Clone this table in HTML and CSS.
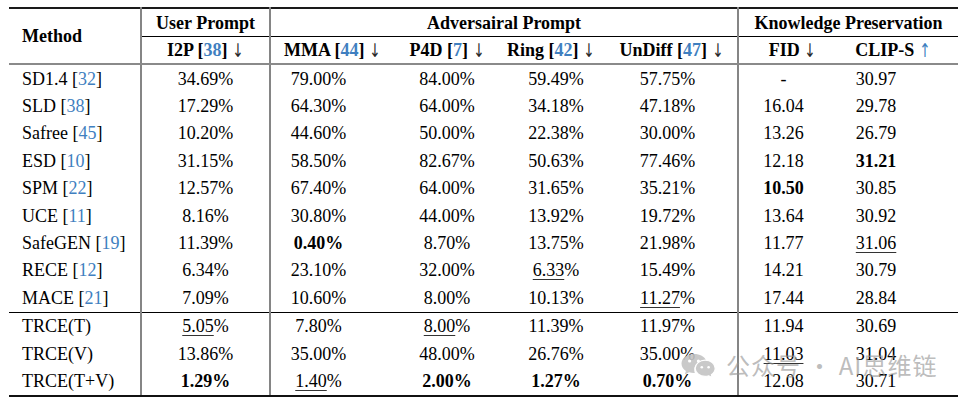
FILE: index.html
```html
<!DOCTYPE html>
<html lang="en">
<head>
<meta charset="utf-8">
<title>Results table</title>
<link rel="stylesheet" href="styles.css">
</head>
<body>
<div class="page">
  <table class="results">
    <colgroup>
      <col class="c-method"><col class="c-user"><col class="c-mma"><col class="c-p4d"><col class="c-ring"><col class="c-undiff"><col class="c-fid"><col class="c-clip">
    </colgroup>
    <thead>
      <tr class="h1">
        <th rowspan="2" class="method-h vsep">Method</th>
        <th class="vsep grp">User Prompt</th>
        <th colspan="4" class="vsep grp">Adversairal Prompt</th>
        <th colspan="2" class="grp">Knowledge Preservation</th>
      </tr>
      <tr class="h2">
        <th class="vsep">I2P [<span class="cite">38</span>] <span class="arr">↓</span></th>
        <th class="h-mma">MMA [<span class="cite">44</span>] <span class="arr">↓</span></th>
        <th>P4D [<span class="cite">7</span>] <span class="arr">↓</span></th>
        <th class="h-ring">Ring [<span class="cite">42</span>] <span class="arr">↓</span></th>
        <th class="vsep h-undiff">UnDiff [<span class="cite">47</span>] <span class="arr">↓</span></th>
        <th class="h-fid">FID <span class="arr">↓</span></th>
        <th class="h-clip">CLIP-S <span class="arr up">↑</span></th>
      </tr>
    </thead>
    <tbody>
      <tr><td class="m vsep">SD1.4 [<span class="cite">32</span>]</td><td class="vsep">34.69%</td><td class="mma">79.00%</td><td>84.00%</td><td>59.49%</td><td class="vsep und">57.75%</td><td>-</td><td class="clip">30.97</td></tr>
      <tr><td class="m vsep">SLD [<span class="cite">38</span>]</td><td class="vsep">17.29%</td><td class="mma">64.30%</td><td>64.00%</td><td>34.18%</td><td class="vsep und">47.18%</td><td>16.04</td><td class="clip">29.78</td></tr>
      <tr><td class="m vsep">Safree [<span class="cite">45</span>]</td><td class="vsep">10.20%</td><td class="mma">44.60%</td><td>50.00%</td><td>22.38%</td><td class="vsep und">30.00%</td><td>13.26</td><td class="clip">26.79</td></tr>
      <tr><td class="m vsep">ESD [<span class="cite">10</span>]</td><td class="vsep">31.15%</td><td class="mma">58.50%</td><td>82.67%</td><td>50.63%</td><td class="vsep und">77.46%</td><td>12.18</td><td class="clip"><b>31.21</b></td></tr>
      <tr><td class="m vsep">SPM [<span class="cite">22</span>]</td><td class="vsep">12.57%</td><td class="mma">67.40%</td><td>64.00%</td><td>31.65%</td><td class="vsep und">35.21%</td><td><b>10.50</b></td><td class="clip">30.85</td></tr>
      <tr><td class="m vsep">UCE [<span class="cite">11</span>]</td><td class="vsep">8.16%</td><td class="mma">30.80%</td><td>44.00%</td><td>13.92%</td><td class="vsep und">19.72%</td><td>13.64</td><td class="clip">30.92</td></tr>
      <tr><td class="m vsep">SafeGEN [<span class="cite">19</span>]</td><td class="vsep">11.39%</td><td class="mma"><b>0.40%</b></td><td>8.70%</td><td>13.75%</td><td class="vsep und">21.98%</td><td>11.77</td><td class="clip"><u>31.06</u></td></tr>
      <tr><td class="m vsep">RECE [<span class="cite">12</span>]</td><td class="vsep">6.34%</td><td class="mma">23.10%</td><td>32.00%</td><td><u>6.33</u>%</td><td class="vsep und">15.49%</td><td>14.21</td><td class="clip">30.79</td></tr>
      <tr class="mid"><td class="m vsep">MACE [<span class="cite">21</span>]</td><td class="vsep">7.09%</td><td class="mma">10.60%</td><td>8.00%</td><td>10.13%</td><td class="vsep und"><u>11.27</u>%</td><td>17.44</td><td class="clip">28.84</td></tr>
      <tr><td class="m vsep">TRCE(T)</td><td class="vsep"><u>5.05</u>%</td><td class="mma">7.80%</td><td><u>8.00</u>%</td><td>11.39%</td><td class="vsep und">11.97%</td><td>11.94</td><td class="clip">30.69</td></tr>
      <tr><td class="m vsep">TRCE(V)</td><td class="vsep">13.86%</td><td class="mma">35.00%</td><td>48.00%</td><td>26.76%</td><td class="vsep und">35.00%</td><td><u>11.03</u></td><td class="clip">31.04</td></tr>
      <tr class="last"><td class="m vsep">TRCE(T+V)</td><td class="vsep"><b>1.29%</b></td><td class="mma"><u>1.40</u>%</td><td><b>2.00%</b></td><td><b>1.27%</b></td><td class="vsep und"><b>0.70%</b></td><td>12.08</td><td class="clip">30.71</td></tr>
    </tbody>
  </table>

  <div class="watermark">
    <svg class="wx" viewBox="0 0 38 24" width="38" height="24" aria-hidden="true">
      <path d="M14 1C6.8 1 1.5 5.3 1.5 10.6c0 3 1.7 5.6 4.4 7.4L4.8 21.5l4.3-2.3c1.5.4 3.1.7 4.9.7h.8c-.4-1-.6-2-.6-3.1 0-5.3 5-9.5 11.2-9.5h.6C24.7 3.7 19.8 1 14 1z" fill="#c4c4c4"/>
      <circle cx="9.6" cy="8" r="1.6" fill="#fff"/>
      <circle cx="18.4" cy="8" r="1.6" fill="#fff"/>
      <path d="M25.2 9.2c-5.6 0-10 3.7-10 8.1s4.4 8.1 10 8.1c1.3 0 2.5-.2 3.6-.6l3.5 1.9-.9-3c2.3-1.5 3.8-3.8 3.8-6.4 0-4.4-4.4-8.1-10-8.1z" fill="#c4c4c4" stroke="#fff" stroke-width="1.2" transform="translate(0 -2)"/>
      <circle cx="21.8" cy="14.2" r="1.3" fill="#fff"/>
      <circle cx="28.6" cy="14.2" r="1.3" fill="#fff"/>
    </svg>
    <span class="wm-text">公众号 · AI思维链</span>
  </div>
</div>
</body>
</html>
```

FILE: styles.css
```css
html, body {
  margin: 0;
  padding: 0;
  background: #ffffff;
}

.page {
  position: relative;
  padding: 7px 7px 0 9px;
  font-family: "Liberation Serif", "Times New Roman", serif;
  font-size: 18px;
  color: #000;
}

.results {
  width: 949px;
  table-layout: fixed;
  border-collapse: collapse;
  border-top: 2px solid #1a1a1a;
}

.c-method { width: 132px; }
.c-user { width: 129px; }
.c-mma { width: 124px; }
.c-p4d { width: 106px; }
.c-ring { width: 112px; }
.c-undiff { width: 126px; }
.c-fid { width: 90px; }
.c-clip { width: 130px; }

.results th,
.results td {
  padding: 0;
  text-align: center;
  vertical-align: middle;
  white-space: nowrap;
  line-height: 20px;
}

.results th {
  font-weight: bold;
}

.h1 th {
  height: 27px;
}
.h1 th.grp {
  border-bottom: 1px solid #000;
}

.h2 th {
  height: 26px;
}

.h2 th,
.results th.method-h {
  border-bottom: 2px solid #8a8a8a;
}

.results th.method-h {
  text-align: left;
  padding-left: 13px;
}

.vsep {
  border-right: 2px solid #858585;
}

.results td {
  height: 27.4px;
}

.results td.m {
  text-align: left;
  padding-left: 13px;
}

.results td.mma { padding-right: 28px; }
.results td.und { padding-right: 14px; }
.results td.clip { padding-right: 34px; }

.h2 th.h-ring { padding-right: 10px; }
.h2 th.h-undiff { padding-right: 6px; }
.h2 th.h-fid { padding-left: 18px; }

.mid td {
  border-bottom: 1px solid #000;
}

.last td {
  border-bottom: 2px solid #111;
}

.cite {
  color: #3f7fc0;
}

.arr {
  display: inline-block;
  font-family: "DejaVu Sans", sans-serif;
  font-weight: normal;
  font-size: 19px;
  line-height: 20px;
  color: #2b2b2b;
  transform: scaleX(0.72);
  margin: 0 -2px;
  vertical-align: -1px;
}
.arr.up {
  color: #3f7fc0;
}

u {
  text-decoration: underline;
  text-decoration-thickness: 1px;
  text-underline-offset: 3px;
  text-decoration-color: #333;
}

b {
  font-weight: bold;
}

.watermark {
  position: absolute;
  left: 680px;
  top: 352px;
  display: flex;
  align-items: center;
  gap: 8px;
  opacity: 0.9;
  pointer-events: none;
}

.wx {
  display: block;
}

.wm-text {
  font-family: "Noto Sans CJK SC", "Noto Sans", sans-serif;
  font-size: 24px;
  line-height: 26px;
  letter-spacing: 1px;
  color: rgba(150, 150, 150, 0.7);
}
```
